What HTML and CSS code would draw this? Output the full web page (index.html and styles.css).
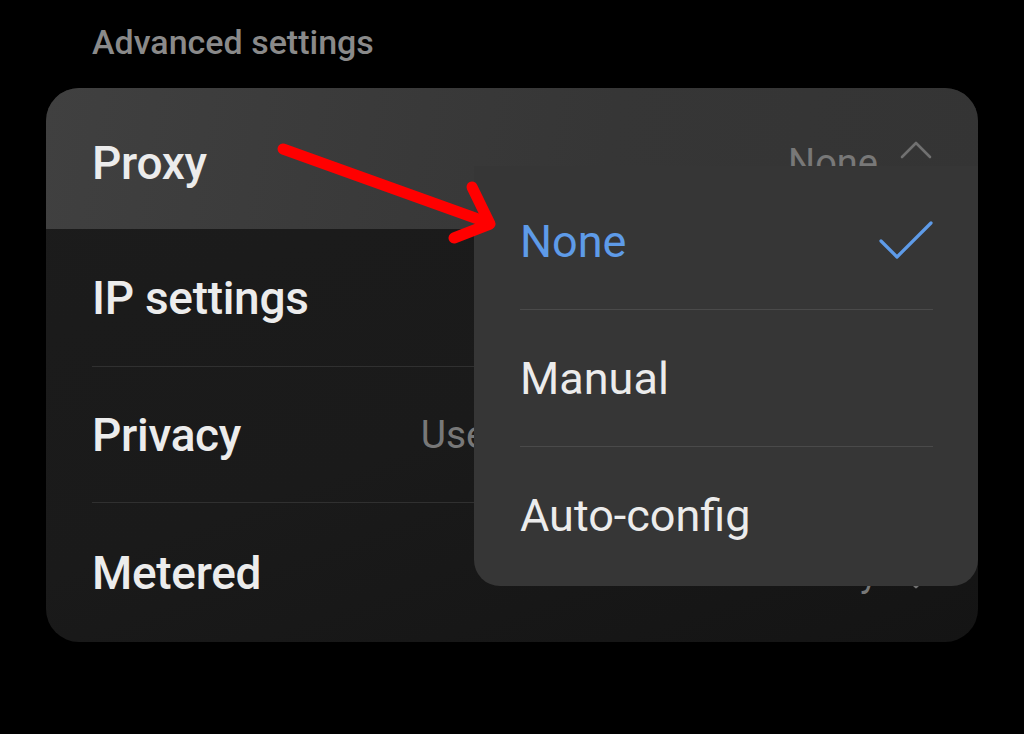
FILE: index.html
```html
<!DOCTYPE html>
<html lang="en">
<head>
<meta charset="utf-8">
<title>Advanced settings</title>
<link rel="stylesheet" href="styles.css">
</head>
<body>
<div class="screen">
  <h2 class="section-title">Advanced settings</h2>
  <div class="card">
    <div class="row row-proxy">
      <span class="label">Proxy</span>
      <span class="value">None<svg class="chev chev-up" viewBox="0 0 32 20" width="32" height="20"><path d="M2 17 L16 3 L30 17"/></svg></span>
    </div>
    <div class="row row-ip">
      <span class="label">IP settings</span>
      <span class="value">DHCP<svg class="chev" viewBox="0 0 32 20" width="32" height="20"><path d="M2 3 L16 17 L30 3"/></svg></span>
    </div>
    <div class="row row-privacy divided">
      <span class="label">Privacy</span>
      <span class="value value-wide">Use randomized MAC<svg class="chev" viewBox="0 0 32 20" width="32" height="20"><path d="M2 3 L16 17 L30 3"/></svg></span>
    </div>
    <div class="row row-metered divided">
      <span class="label">Metered</span>
      <span class="value">Detect automatically<svg class="chev chev-down" viewBox="0 0 32 20" width="32" height="20"><path d="M2 3 L16 17 L30 3"/></svg></span>
    </div>

    <div class="dropdown">
      <div class="option selected">
        <span>None</span>
        <svg class="check" viewBox="0 0 54 40" width="54" height="40"><path d="M2 20 L18 36 L52 2"/></svg>
      </div>
      <div class="option">
        <span>Manual</span>
      </div>
      <div class="option">
        <span>Auto-config</span>
      </div>
    </div>
  </div>

  <svg class="annotation" viewBox="0 0 1024 734" width="1024" height="734">
    <path d="M283 149 L489 223"/>
    <path d="M472 187 L490 224 L454 238"/>
  </svg>
</div>
</body>
</html>
```

FILE: styles.css
```css
* {
  box-sizing: border-box;
}

html, body {
  margin: 0;
  padding: 0;
  background: #000;
}

body {
  font-family: Roboto, "Noto Sans", "Liberation Sans", sans-serif;
  width: 1024px;
  height: 734px;
  overflow: hidden;
}

.screen {
  position: relative;
  width: 1024px;
  height: 734px;
  padding: 22px 46px 0 46px;
}

.section-title {
  margin: 0 0 26px 0;
  padding-left: 46px;
  font-size: 34px;
  line-height: 40px;
  font-weight: 500;
  color: #8a8a8a;
}

.card {
  position: relative;
  width: 932px;
  border-radius: 33px;
  overflow: hidden;
  background: linear-gradient(160deg, #1c1c1c 0%, #1a1a1a 55%, #141414 100%);
}

.row {
  display: flex;
  align-items: center;
  justify-content: space-between;
  margin: 0 46px;
}

.label {
  font-size: 46px;
  font-weight: 500;
  color: #ececec;
  letter-spacing: -0.3px;
  white-space: nowrap;
}

.value {
  display: flex;
  align-items: center;
  gap: 22px;
  font-size: 38px;
  color: #787878;
  white-space: nowrap;
  flex: none;
}

.value-wide {
  font-size: 39px;
  word-spacing: 41px;
}

.chev {
  fill: none;
  stroke: #707070;
  stroke-width: 2.6;
  stroke-linecap: round;
  stroke-linejoin: round;
  flex: none;
}

.chev-up {
  margin-bottom: 26px;
}

.chev-down {
  margin-top: 14px;
}

.row-proxy {
  margin: 0;
  padding: 8px 46px 0 46px;
  height: 141px;
  background: linear-gradient(100deg, #404040 0%, #393939 40%, #363636 60%, #343434 100%);
}

.row-ip {
  height: 137px;
}

.row-privacy {
  height: 136px;
}

.row-metered {
  height: 140px;
}

.divided {
  border-top: 1px solid #303030;
}

.dropdown {
  position: absolute;
  top: 78px;
  left: 428px;
  width: 504px;
  height: 420px;
  padding: 8px 45px 0 46px;
  background: #363636;
  border-radius: 0 0 26px 26px;
}

.option {
  display: flex;
  align-items: center;
  justify-content: space-between;
  height: 135px;
  font-size: 45px;
  color: #ececec;
}

.option + .option {
  border-top: 1px solid #4a4a4a;
  height: 137px;
}

.option.selected {
  color: #5e9be8;
}

.check {
  fill: none;
  stroke: #5e9be8;
  stroke-width: 3.2;
  stroke-linecap: round;
  stroke-linejoin: round;
  margin-bottom: 2px;
}

.annotation {
  position: absolute;
  left: 0;
  top: 0;
  pointer-events: none;
  fill: none;
  stroke: #ff0000;
  stroke-width: 11;
  stroke-linecap: round;
  stroke-linejoin: round;
}
```
